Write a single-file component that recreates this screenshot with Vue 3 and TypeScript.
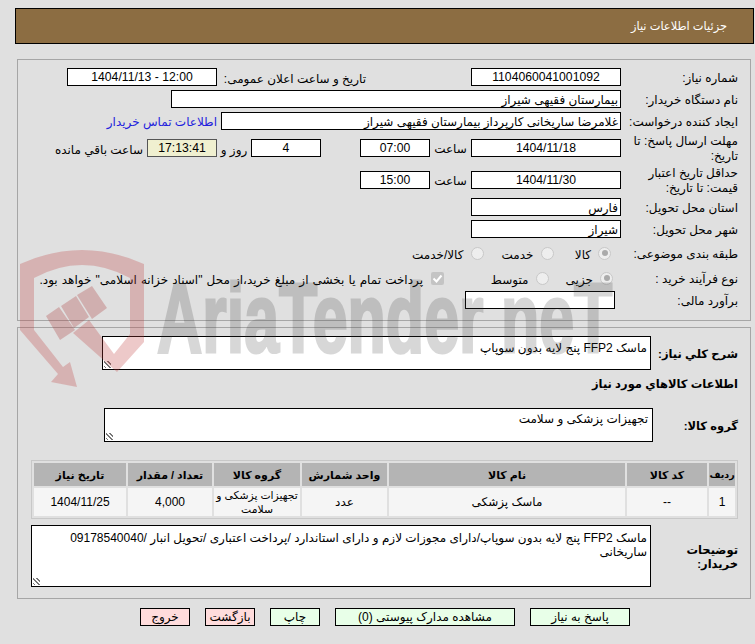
<script setup lang="ts">
const headers = ['ردیف', 'کد کالا', 'نام کالا', 'واحد شمارش', 'گروه کالا', 'تعداد / مقدار', 'تاریخ نیاز']
</script>

<template>
  <div class="page" dir="rtl">
    <header class="title"><span>جزئیات اطلاعات نیاز</span></header>

    <section class="panel top">
      <div class="row r1">
        <label class="lab">شماره نیاز:</label>
        <div class="box w150 c">1104060041001092</div>
        <label class="lab2">تاریخ و ساعت اعلان عمومی:</label>
        <div class="box w150 c" dir="ltr">1404/11/13 - 12:00</div>
      </div>
      <div class="row r2">
        <label class="lab">نام دستگاه خریدار:</label>
        <div class="box w450">بیمارستان فقیهی شیراز</div>
      </div>
      <div class="row r3">
        <label class="lab">ایجاد کننده درخواست:</label>
        <div class="box w400">غلامرضا ساریخانی کارپرداز بیمارستان فقیهی شیراز</div>
        <a class="link">اطلاعات تماس خریدار</a>
      </div>
      <div class="row r4">
        <label class="lab two">مهلت ارسال پاسخ: تا تاریخ:</label>
        <div class="box w150 c">1404/11/18</div>
        <span class="sa">ساعت</span>
        <div class="box w70 c">07:00</div>
        <div class="box w70 c day">4</div>
        <span class="rz">روز و</span>
        <div class="box w70 c timer">17:13:41</div>
        <span class="rem">ساعت باقي مانده</span>
      </div>
      <div class="row r5">
        <label class="lab two">حداقل تاریخ اعتبار قیمت: تا تاریخ:</label>
        <div class="box w150 c">1404/11/30</div>
        <span class="sa">ساعت</span>
        <div class="box w70 c">15:00</div>
      </div>
      <div class="row r6">
        <label class="lab">استان محل تحویل:</label>
        <div class="box w150">فارس</div>
      </div>
      <div class="row r7">
        <label class="lab">شهر محل تحویل:</label>
        <div class="box w150">شیراز</div>
      </div>
      <div class="row r8">
        <label class="lab">طبقه بندی موضوعی:</label>
        <div class="opts shift">
          <span class="opt o1"><i class="radio on"></i>کالا</span>
          <span class="opt o2"><i class="radio"></i>خدمت</span>
          <span class="opt"><i class="radio"></i>کالا/خدمت</span>
        </div>
      </div>
      <div class="row r9">
        <label class="lab">نوع فرآیند خرید :</label>
        <div class="opts">
          <span class="opt o3"><i class="radio on"></i>جزیی</span>
          <span class="opt o4"><i class="radio"></i>متوسط</span>
          <span class="opt wide"><i class="check"><svg viewBox="0 0 13 13" width="13" height="13"><path d="M2.5 6.5l3 3 5-6" fill="none" stroke="#fff" stroke-width="2"/></svg></i>پرداخت تمام یا بخشی از مبلغ خرید،از محل "اسناد خزانه اسلامی" خواهد بود.</span>
        </div>
      </div>
      <div class="row r10">
        <label class="lab">برآورد مالی:</label>
        <div class="box w150 est"></div>
      </div>
    </section>

    <section class="panel bottom">
      <div class="row s1">
        <label class="blab">شرح کلي نیاز:</label>
        <div class="area a1">ماسک FFP2 پنج لایه بدون سوپاپ<i class="grip"></i></div>
      </div>
      <div class="sub">اطلاعات کالاهاي مورد نیاز</div>
      <div class="row s2">
        <label class="blab">گروه کالا:</label>
        <div class="area a2">تجهیزات پزشکی و سلامت<i class="grip"></i></div>
      </div>
      <table class="grid">
        <thead>
          <tr><th v-for="h in headers" :key="h">{{ h }}</th></tr>
        </thead>
        <tbody>
          <tr>
            <td>1</td>
            <td>--</td>
            <td>ماسک پزشکی</td>
            <td>عدد</td>
            <td class="tight">تجهیزات پزشکی و<br>سلامت</td>
            <td>4,000</td>
            <td>1404/11/25</td>
          </tr>
        </tbody>
      </table>
      <div class="row s3">
        <label class="blab two">توضیحات خریدار:</label>
        <div class="area a3">ماسک FFP2 پنج لایه بدون سوپاپ/دارای مجوزات لازم و دارای استاندارد /پرداخت اعتباری /تحویل انبار /09178540040 ساریخانی<i class="grip"></i></div>
      </div>
    </section>

    <footer class="actions">
      <button class="btn ok b100">پاسخ به نیاز</button>
      <button class="btn ok b180">مشاهده مدارک پیوستی (0)</button>
      <button class="btn ok">چاپ</button>
      <button class="btn no">بازگشت</button>
      <button class="btn no">خروج</button>
    </footer>

    <div class="mark" dir="ltr" aria-hidden="true">
      <svg class="shield" viewBox="0 0 130 140" width="130" height="140">
        <path d="M0 14 Q62 -14 124 14 V92 L97 122 L53 83 L69 70 L94 104 L110 84 V28 Q62 2 14 28 V80 L43 117 L50 112 L57 137 L31 132 L38 124 L0 80 Z" fill="#be3c3c" fill-opacity="0.28"/>
        <path d="M26 66 L39 57 L55 80 L40 90 Z M41 56 L56 46 L69 67 L54 78 Z M57 45 L72 36 L87 58 L72 69 Z" fill="#a83232" fill-opacity="0.28"/>
      </svg>
      <span class="word">AriaTender neT</span>
    </div>
  </div>
</template>

<style>
html, body { margin: 0; background: #e0e0e0; }
</style>

<style scoped>
.page {
  position: relative;
  width: 755px;
  height: 644px;
  overflow: hidden;
  background: #e0e0e0;
  font-family: "Liberation Sans", "DejaVu Sans", sans-serif;
  font-size: 12px;
  color: #000;
  box-sizing: border-box;
  padding: 8px 1px 0 15px;
}
.title {
  height: 34px;
  border: 1px solid #000;
  background: #8c6d42;
  color: #fff;
  display: flex;
  align-items: center;
  padding-right: 26px;
  font-size: 11.4px;
}
.panel {
  border: 1px solid #a6a6a6;
  margin: 0 3px 0 2px;
  box-sizing: border-box;
  position: relative;
}
.top { margin-top: 15px; height: 262px; padding: 8px 12px 0 0; }
.bottom { margin-top: 6px; height: 272px; padding: 8px 12px 0 12px; }
.row { display: flex; align-items: center; }
.lab { width: 117px; flex: none; line-height: 15px; padding-top: 3px; box-sizing: border-box; }
.lab.two { padding-top: 2px; }
.box {
  height: 18px;
  box-sizing: border-box;
  border: 1px solid #000;
  background: #fff;
  line-height: 18px;
  padding: 0 2px;
  white-space: nowrap;
  overflow: hidden;
  flex: none;
}
.c { text-align: center; line-height: 16px; font-size: 12.2px; }
.w150 { width: 150px; }
.w450 { width: 450px; }
.w400 { width: 400px; }
.w70 { width: 70px; }
.lab2 { width: 254px; flex: none; box-sizing: border-box; padding: 3px 105px 0 0; white-space: nowrap; }
.r1, .r2, .r3, .r4, .r5, .r6, .r7, .r8, .r9, .r10 { height: 18px; }
.r2 { margin-top: 4px; }
.r3 { margin-top: 4px; }
.r4 { margin-top: 9px; }
.r5 { margin-top: 14px; }
.r6 { margin-top: 9px; }
.r7 { margin-top: 4px; }
.r8 { margin-top: 6px; }
.r9 { margin-top: 7px; }
.r10 { margin-top: 4px; }
.link { color: #2222dd; margin-right: 4px; white-space: nowrap; padding-top: 2px; }
.sa { width: 41px; flex: none; text-align: center; padding-top: 2px; }
.day { margin-right: 39px; }
.rz { width: 34px; flex: none; text-align: center; padding-top: 3px; }
.rem { margin-right: 4px; white-space: nowrap; padding-top: 3px; }
.timer { background: #f0f0d0; border-color: #555; }
.est { margin-right: 6px; }
.opts { display: flex; align-items: center; }
.shift { padding-right: 2px; }
.opt { display: flex; align-items: center; white-space: nowrap; padding-top: 4px; }
.wide { word-spacing: 0.8px; }
.o1 { width: 57.5px; }
.o2 { width: 70px; }
.o3 { width: 64.5px; }
.o4 { width: 104.5px; }
.radio {
  width: 11px;
  height: 11px;
  border-radius: 50%;
  border: 1px solid #c8c8c8;
  background: #eee;
  margin: -4px 8px 0 7px;
  position: relative;
  flex: none;
}
.radio.on::after {
  content: "";
  position: absolute;
  inset: 2.5px;
  border-radius: 50%;
  background: #aaa;
}
.check {
  width: 13px;
  height: 13px;
  border-radius: 2px;
  background: #c4c4c4;
  margin: -4px 8px 0 8px;
  flex: none;
  display: block;
}
.check svg { display: block; }
.blab { width: 87px; flex: none; font-weight: 700; font-size: 11.5px; line-height: 14px; padding-top: 2px; white-space: nowrap; }
.blab.two { white-space: normal; box-sizing: border-box; padding-left: 20px; }
.area {
  position: relative;
  box-sizing: border-box;
  border: 1px solid #000;
  background: #fff;
  padding: 4px 3px 2px;
  line-height: 14px;
}
.grip {
  position: absolute;
  left: 1px;
  bottom: 1px;
  width: 7px;
  height: 7px;
  background: repeating-linear-gradient(45deg, transparent 0 1px, #777 1px 2px, transparent 2px 3px);
}
.s1 { height: 34px; }
.a1 { width: 549px; height: 34px; }
.sub { font-weight: 700; font-size: 11.5px; margin-top: 7px; height: 15px; line-height: 15px; }
.s2 { height: 34px; margin-top: 16px; }
.a2 { width: 549px; height: 34px; margin-right: -2px; padding-right: 4px; padding-top: 3px; }
.grid {
  border-collapse: separate;
  border-spacing: 2px;
  border: 1px solid #c8c8c8;
  margin-top: 18px;
  width: 707px;
  table-layout: fixed;
  height: 59px;
}
.grid th, .grid td { padding: 0; text-align: center; line-height: 14px; white-space: nowrap; }
.grid th { background: #b4b4b4; height: 23px; font-size: 11px; font-weight: 700; }
.grid th:first-child { font-size: 9.5px; }
.grid td { background: #f5f5f5; height: 28px; }
.grid td.tight { font-size: 10.8px; }
.grid th:nth-child(1) { width: 26px; }
.grid th:nth-child(2) { width: 80px; }
.grid th:nth-child(3) { width: 236px; }
.grid th:nth-child(4) { width: 85px; }
.grid th:nth-child(5) { width: 86px; }
.grid th:nth-child(6) { width: 84px; }
.s3 { height: 62px; margin-top: 6px; }
.a3 { width: 620px; height: 62px; padding-top: 5px; }
.actions {
  display: flex;
  gap: 15px;
  margin: 9px 124px 0 0;
}
.btn {
  width: 50px;
  height: 18px;
  padding: 0;
  border: 1px solid #000;
  border-radius: 0;
  font: inherit;
  line-height: 15px;
  color: #000;
}
.ok { background: #e8ffe8; }
.no { background: #ffdcdc; }
.b100 { width: 100px; }
.b180 { width: 180px; }
.mark {
  position: absolute;
  left: 20px;
  top: 250px;
  width: 720px;
  height: 140px;
  pointer-events: none;
}
.shield { position: absolute; left: 0; top: 0; }
.word {
  position: absolute;
  left: 137px;
  top: 3px;
  font-family: "Liberation Sans", sans-serif;
  font-size: 98px;
  font-weight: 700;
  color: #3c3c3c;
  -webkit-text-stroke: 3px #3c3c3c;
  opacity: 0.2;
  white-space: nowrap;
  transform-origin: left top;
  transform: scaleX(0.64);
  line-height: 130px;
}
</style>
